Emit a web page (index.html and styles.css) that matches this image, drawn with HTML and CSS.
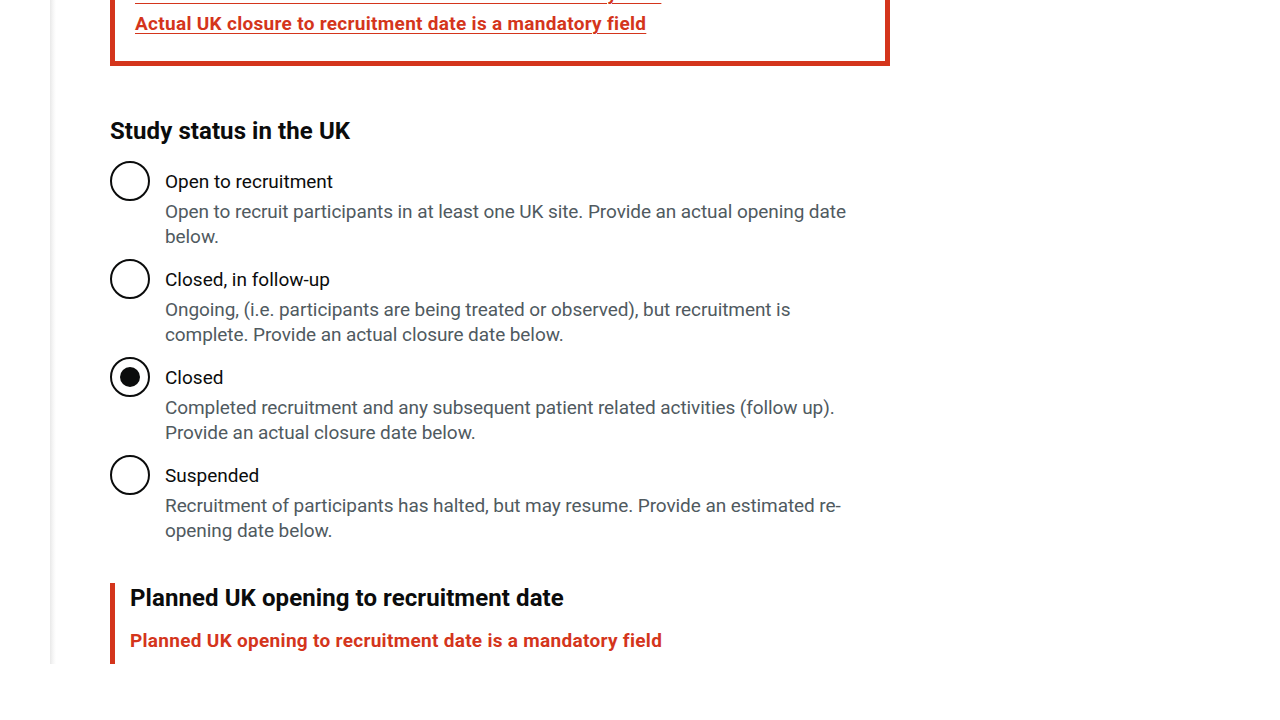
FILE: index.html
```html
<!DOCTYPE html>
<html lang="en">
<head>
<meta charset="utf-8">
<title>Study status</title>
<link rel="stylesheet" href="styles.css">
</head>
<body>
<main class="main">
  <div class="error-summary">
    <ul class="error-list">
      <li><a href="#planned-closure" class="error-link">Planned UK closure to recruitment date is a mandatory field</a></li>
      <li><a href="#closure" class="error-link">Actual UK closure to recruitment date is a mandatory field</a></li>
    </ul>
  </div>

  <fieldset class="fieldset">
    <legend class="legend">Study status in the UK</legend>
    <div class="radios">
      <div class="radio-item">
        <span class="radio"></span>
        <div class="radio-text">
          <span class="radio-label">Open to recruitment</span>
          <span class="radio-hint">Open to recruit participants in at least one UK site. Provide an actual opening date below.</span>
        </div>
      </div>
      <div class="radio-item">
        <span class="radio"></span>
        <div class="radio-text">
          <span class="radio-label">Closed, in follow-up</span>
          <span class="radio-hint">Ongoing, (i.e. participants are being treated or observed), but recruitment is complete. Provide an actual closure date below.</span>
        </div>
      </div>
      <div class="radio-item">
        <span class="radio radio-checked"></span>
        <div class="radio-text">
          <span class="radio-label">Closed</span>
          <span class="radio-hint">Completed recruitment and any subsequent patient related activities (follow up). Provide an actual closure date below.</span>
        </div>
      </div>
      <div class="radio-item">
        <span class="radio"></span>
        <div class="radio-text">
          <span class="radio-label">Suspended</span>
          <span class="radio-hint">Recruitment of participants has halted, but may resume. Provide an estimated re-opening date below.</span>
        </div>
      </div>
    </div>
  </fieldset>

  <div class="form-group-error" id="planned">
    <h2 class="group-heading">Planned UK opening to recruitment date</h2>
    <p class="error-message">Planned UK opening to recruitment date is a mandatory field</p>
  </div>
</main>
</body>
</html>
```

FILE: styles.css
```css
html, body {
  margin: 0;
  padding: 0;
  background: #ffffff;
}
body {
  font-family: Roboto, "Liberation Sans", Arial, sans-serif;
  color: #0b0c0c;
  height: 720px;
  overflow: hidden;
}
.main {
  margin-left: 50px;
  padding-left: 60px;
  width: 780px;
  background: linear-gradient(to right, #e9e9e9 0px, #f6f6f6 3px, #ffffff 6px);
  background-repeat: no-repeat;
  background-size: 6px 100%;
}
.error-summary {
  margin-top: -44px;
  margin-bottom: 50px;
  border: 5px solid #d4351c;
  padding: 20px 20px 20px 20px;
}
.error-list {
  list-style: none;
  margin: 0;
  padding: 0;
}
.error-list li {
  font-size: 19px;
  line-height: 25px;
  font-weight: 700;
  letter-spacing: 0.3px;
  margin-bottom: 5px;
}
.error-link {
  color: #d4351c;
  text-decoration: underline;
  text-decoration-thickness: 1px;
  text-underline-offset: 3px;
}
.fieldset {
  border: 0;
  margin: 0 0 30px 0;
  padding: 0;
  min-width: 0;
}
.legend {
  padding: 0;
  font-size: 24px;
  line-height: 30px;
  font-weight: 700;
  letter-spacing: 0.08px;
  margin-bottom: 15px;
}
.radios {
  display: flex;
  flex-direction: column;
}
.radio-item {
  display: flex;
  align-items: flex-start;
  margin-bottom: 10px;
  min-height: 40px;
}
.radio {
  flex: 0 0 auto;
  width: 40px;
  height: 40px;
  box-sizing: border-box;
  border: 2px solid #0b0c0c;
  border-radius: 50%;
  display: flex;
  align-items: center;
  justify-content: center;
}
.radio-checked::after {
  content: "";
  width: 20px;
  height: 20px;
  border-radius: 50%;
  background: #0b0c0c;
}
.radio-text {
  display: flex;
  flex-direction: column;
  padding-left: 15px;
  padding-right: 15px;
  font-size: 19px;
  line-height: 25px;
}
.radio-label {
  padding: 8px 0 5px 0;
  color: #0b0c0c;
}
.radio-hint {
  color: #505a5f;
  letter-spacing: -0.08px;
}
.form-group-error {
  border-left: 5px solid #d4351c;
  padding-left: 15px;
}
.group-heading {
  margin: 0 0 15px 0;
  font-size: 24px;
  line-height: 30px;
  font-weight: 700;
  letter-spacing: 0.08px;
}
.error-message {
  margin: 0;
  padding-bottom: 11px;
  font-size: 19px;
  line-height: 25px;
  font-weight: 700;
  letter-spacing: 0.3px;
  color: #d4351c;
}
```
